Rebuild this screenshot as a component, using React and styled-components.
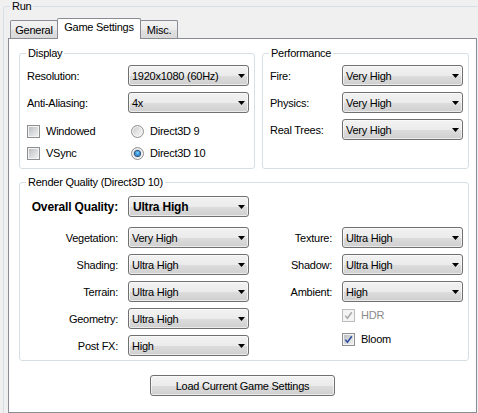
import React from 'react';
import styled, { createGlobalStyle } from 'styled-components';

const GlobalStyle = createGlobalStyle`
  html, body { margin: 0; padding: 0; background: #f0f0f0; }
  body {
    font-family: "Liberation Sans", Arial, sans-serif;
    font-size: 11px;
    letter-spacing: -0.25px;
    color: #000;
  }
  *, *::before, *::after { box-sizing: border-box; }
`;

const Viewport = styled.div`
  width: 478px;
  height: 413px;
  overflow: hidden;
  background: #f0f0f0;
`;

const Group = styled.fieldset`
  margin: ${p => p.$margin || '0'};
  padding: 0;
  min-width: 0;
  width: ${p => p.$w}px;
  height: ${p => (p.$h ? `${p.$h}px` : 'auto')};
  border: 1px solid #d5dfe5;
  border-radius: 3px;
`;

const Legend = styled.legend`
  margin-left: 6px;
  padding: 0 2px;
  height: 13px;
  line-height: 13px;
  font-size: 11px;
`;

const GroupBody = styled.div`
  padding: ${p => p.$pad};
`;

const TabControl = styled.div`
  margin-left: 4px;
`;

const TabStrip = styled.div`
  display: flex;
  align-items: flex-end;
  height: 20px;
  margin-top: 5px;
  padding-left: 2px;
`;

const Tab = styled.div`
  width: ${p => p.$w}px;
  height: ${p => (p.$active ? 21 : 18)}px;
  margin-left: ${p => (p.$first ? 0 : -1)}px;
  margin-bottom: ${p => (p.$active ? -1 : 0)}px;
  padding-top: ${p => (p.$active ? 2 : 3)}px;
  line-height: 13px;
  text-align: center;
  white-space: nowrap;
  border: 1px solid #898c95;
  border-bottom: none;
  border-radius: 2px 2px 0 0;
  background: ${p => (p.$active ? '#ffffff' : 'linear-gradient(#f4f4f4, #ebebeb 50%, #e1e1e1 51%, #d9d9d9)')};
  position: ${p => (p.$active ? 'relative' : 'static')};
  z-index: ${p => (p.$active ? 1 : 'auto')};
`;

const Panel = styled.div`
  width: 469px;
  height: 375px;
  border: 1px solid #898c95;
  background: #ffffff;
  padding: 8px 7px 0 10px;
`;

const TopRow = styled.div`
  display: flex;
  gap: 7px;
  align-items: stretch;
`;

const Rows = styled.div`
  display: flex;
  flex-direction: column;
  gap: 6px;
`;

const Row = styled.div`
  display: flex;
  align-items: center;
  height: 21px;
`;

const Label = styled.div`
  width: ${p => p.$w}px;
  flex: none;
  white-space: nowrap;
`;

const GridLabel = styled.div`
  grid-column: ${p => p.$col};
  display: flex;
  align-items: center;
  justify-content: flex-end;
  padding-right: 10px;
  white-space: nowrap;
  font-weight: ${p => (p.$bold ? 700 : 400)};
  font-size: ${p => (p.$bold ? 12 : 11)}px;
  letter-spacing: ${p => (p.$bold ? '-0.15px' : '-0.25px')};
`;

const SelectBox = styled.div`
  width: 121px;
  height: 21px;
  flex: none;
  display: flex;
  align-items: center;
  justify-content: space-between;
  padding: 0 3px 0 ${p => (p.$bold ? 4 : 3)}px;
  border: 1px solid #707070;
  border-radius: 3px;
  background: linear-gradient(#f2f2f2 0%, #ebebeb 50%, #dddddd 51%, #cfcfcf 100%);
  box-shadow: inset 0 0 0 1px rgba(255, 255, 255, 0.6);
  font-weight: ${p => (p.$bold ? 700 : 400)};
  font-size: ${p => (p.$bold ? 12 : 11)}px;
  letter-spacing: ${p => (p.$bold ? '-0.2px' : '-0.25px')};
  white-space: nowrap;
`;

const Arrow = styled.svg`
  flex: none;
  display: block;
`;

function Select({ value, bold }) {
  return (
    <SelectBox $bold={bold}>
      <span>{value}</span>
      <Arrow width="7" height="4" viewBox="0 0 7 4">
        <polygon points="0,0 7,0 3.5,4" fill="#000" />
      </Arrow>
    </SelectBox>
  );
}

const CheckGrid = styled.div`
  display: grid;
  grid-template-columns: 104px auto;
  grid-auto-rows: 16px;
  row-gap: 6px;
  margin-top: 10px;
`;

const Option = styled.div`
  display: flex;
  align-items: center;
  gap: 6px;
  height: 16px;
  white-space: nowrap;
  color: ${p => (p.$disabled ? '#8a8a8a' : '#000')};
`;

const Box = styled.span`
  width: 13px;
  height: 13px;
  flex: none;
  display: flex;
  align-items: center;
  justify-content: center;
  border: 1px solid ${p => (p.$disabled ? '#bcbcbc' : '#8e8f8f')};
  background: ${p =>
    p.$disabled ? '#f4f4f4' : 'linear-gradient(135deg, #b3b7bc 0%, #d8d9db 50%, #f3f3f3 100%)'};
  box-shadow: inset 0 0 0 1px #f4f4f4;
`;

const RadioCircle = styled.span`
  width: 13px;
  height: 13px;
  flex: none;
  border-radius: 50%;
  display: flex;
  align-items: center;
  justify-content: center;
  border: 1px solid #8e8f8f;
  background: linear-gradient(135deg, #c2c5c9 0%, #e4e4e5 50%, #f7f7f7 100%);
  box-shadow: inset 0 0 0 1px #f4f4f4;

  &::after {
    content: '';
    display: ${p => (p.$checked ? 'block' : 'none')};
    width: 5px;
    height: 5px;
    border-radius: 50%;
    background: radial-gradient(circle at 50% 40%, #8fe0ff 0%, #2a8ee0 50%, #16508f 100%);
    box-shadow: 0 0 0 1px #2b4f7a;
  }
`;

function Checkbox({ label, checked, disabled }) {
  return (
    <Option $disabled={disabled}>
      <Box $disabled={disabled}>
        {checked && (
          <svg width="9" height="9" viewBox="0 0 9 9">
            <path
              d="M1.3 4.6 L3.4 7.2 L7.8 1.2"
              fill="none"
              stroke={disabled ? '#a8a8a8' : '#2a4b9b'}
              strokeWidth="1.5"
            />
          </svg>
        )}
      </Box>
      <span>{label}</span>
    </Option>
  );
}

function Radio({ label, checked }) {
  return (
    <Option>
      <RadioCircle $checked={checked} />
      <span>{label}</span>
    </Option>
  );
}

const RadioCell = styled.div`
  padding-left: 0;
`;

const OverallRow = styled.div`
  display: grid;
  grid-template-columns: 108px 121px;
  grid-auto-rows: 21px;
`;

const QualityGrid = styled.div`
  display: grid;
  grid-template-columns: 108px 121px 93px 121px;
  grid-auto-rows: 21px;
  row-gap: 6px;
  margin-top: 10px;
`;

const CheckStack = styled.div`
  grid-column: 4;
  grid-row: 4 / span 2;
  display: flex;
  flex-direction: column;
  gap: 8px;
  margin-top: -1px;
`;

const Button = styled.button`
  display: block;
  width: 185px;
  height: 21px;
  margin: 14px 0 0 131px;
  padding: 0;
  font: inherit;
  letter-spacing: inherit;
  color: #000;
  border: 1px solid #707070;
  border-radius: 3px;
  background: linear-gradient(#f2f2f2 0%, #ebebeb 50%, #dddddd 51%, #cfcfcf 100%);
  box-shadow: inset 0 0 0 1px rgba(255, 255, 255, 0.6);
`;

const leftRows = [
  ['Vegetation:', 'Very High'],
  ['Shading:', 'Ultra High'],
  ['Terrain:', 'Ultra High'],
  ['Geometry:', 'Ultra High'],
  ['Post FX:', 'High'],
];

const rightRows = [
  ['Texture:', 'Ultra High'],
  ['Shadow:', 'Ultra High'],
  ['Ambient:', 'High'],
];

export default function App() {
  const gridItems = [];
  leftRows.forEach(([label, value], i) => {
    gridItems.push(
      <GridLabel key={`l${i}`} $col={1}>{label}</GridLabel>,
      <Select key={`ls${i}`} value={value} />
    );
    if (rightRows[i]) {
      gridItems.push(
        <GridLabel key={`r${i}`} $col={3}>{rightRows[i][0]}</GridLabel>,
        <Select key={`rs${i}`} value={rightRows[i][1]} />
      );
    }
  });

  return (
    <>
      <GlobalStyle />
      <Viewport>
        <Group $w={490} $h={440} $margin="0 0 0 3px">
          <Legend>Run</Legend>
          <TabControl>
            <TabStrip>
              <Tab $w={48} $first>General</Tab>
              <Tab $w={84} $active>Game Settings</Tab>
              <Tab $w={38}>Misc.</Tab>
            </TabStrip>
            <Panel>
              <TopRow>
                <Group $w={236}>
                  <Legend>Display</Legend>
                  <GroupBody $pad="5px 0 7px 7px">
                    <Rows>
                      <Row>
                        <Label $w={101}>Resolution:</Label>
                        <Select value="1920x1080 (60Hz)" />
                      </Row>
                      <Row>
                        <Label $w={101}>Anti-Aliasing:</Label>
                        <Select value="4x" />
                      </Row>
                    </Rows>
                    <CheckGrid>
                      <Checkbox label="Windowed" />
                      <RadioCell><Radio label="Direct3D 9" /></RadioCell>
                      <Checkbox label="VSync" />
                      <RadioCell><Radio label="Direct3D 10" checked /></RadioCell>
                    </CheckGrid>
                  </GroupBody>
                </Group>
                <Group $w={207}>
                  <Legend>Performance</Legend>
                  <GroupBody $pad="5px 0 7px 7px">
                    <Rows>
                      <Row>
                        <Label $w={72}>Fire:</Label>
                        <Select value="Very High" />
                      </Row>
                      <Row>
                        <Label $w={72}>Physics:</Label>
                        <Select value="Very High" />
                      </Row>
                      <Row>
                        <Label $w={72}>Real Trees:</Label>
                        <Select value="Very High" />
                      </Row>
                    </Rows>
                  </GroupBody>
                </Group>
              </TopRow>
              <Group $w={450} $margin="7px 0 0 0">
                <Legend>Render Quality (Direct3D 10)</Legend>
                <GroupBody $pad="7px 0 4px 0">
                  <OverallRow>
                    <GridLabel $col={1} $bold>Overall Quality:</GridLabel>
                    <Select value="Ultra High" bold />
                  </OverallRow>
                  <QualityGrid>
                    {gridItems}
                    <CheckStack>
                      <Checkbox label="HDR" checked disabled />
                      <Checkbox label="Bloom" checked />
                    </CheckStack>
                  </QualityGrid>
                </GroupBody>
              </Group>
              <Button>Load Current Game Settings</Button>
            </Panel>
          </TabControl>
        </Group>
      </Viewport>
    </>
  );
}
